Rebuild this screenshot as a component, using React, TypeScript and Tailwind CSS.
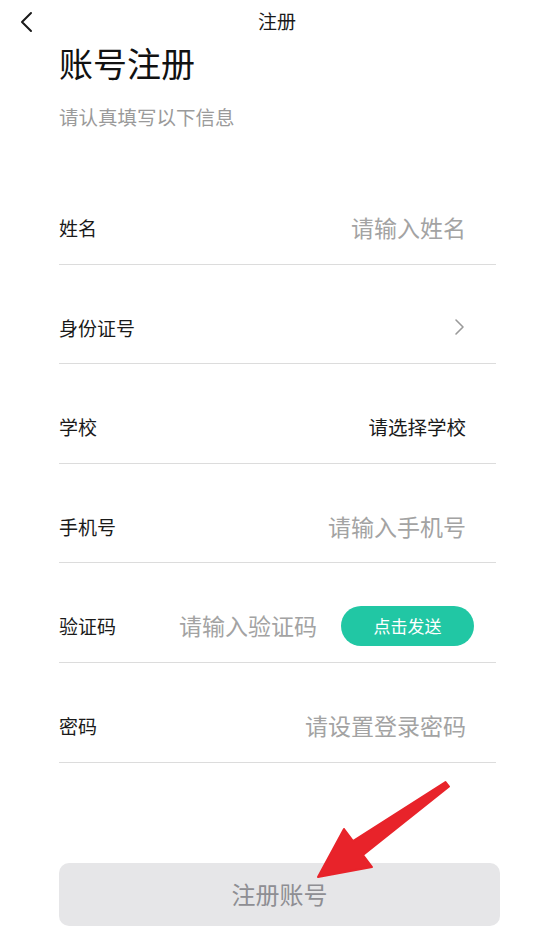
const FONT = { fontFamily: '"Noto Sans CJK SC", "Noto Sans", sans-serif' };

function Row({ label, children, last }: { label: string; children?: React.ReactNode; last?: boolean }) {
  return (
    <div className="h-[99.6px] pt-[26px] border-b border-[#dcdcdc]">
      <div className={`flex h-[73px] items-center ${last ? 'pr-[22px]' : 'pr-[30px]'}`}>
        <span className="text-[19px] leading-none text-[#1a1a1a]">{label}</span>
        <div className="flex flex-1 items-center justify-end">{children}</div>
      </div>
    </div>
  );
}

function Placeholder({ text }: { text: string }) {
  return <span className="text-[23px] leading-none text-[#a3a3a3]">{text}</span>;
}

export default function App() {
  return (
    <div className="relative w-[554px] h-[948px] bg-white overflow-hidden" style={FONT}>
      {/* Header */}
      <div className="relative flex h-[40px] items-center justify-center">
        <svg className="absolute left-[18px] top-[11px]" width="18" height="22" viewBox="0 0 18 22" fill="none">
          <path d="M13 2 L4 11 L13 20" stroke="#1a1a1a" strokeWidth="2" strokeLinecap="round" strokeLinejoin="round" />
        </svg>
        <span className="text-[19px] leading-none text-[#1a1a1a]">注册</span>
      </div>

      <div className="pl-[59px] pr-[58px]">
        <h1 className="mt-[6px] text-[34px] leading-[34px] text-[#111]">账号注册</h1>
        <p className="mt-[27px] text-[19.5px] leading-[20px] text-[#9a9a9a]">请认真填写以下信息</p>

        <div className="mt-[38px]">
          <Row label="姓名">
            <Placeholder text="请输入姓名" />
          </Row>
          <Row label="身份证号">
            <svg width="12" height="18" viewBox="0 0 12 18" fill="none" className="mr-[1px]">
              <path d="M3 2 L10 9 L3 16" stroke="#9a9a9a" strokeWidth="1.6" strokeLinecap="round" strokeLinejoin="round" />
            </svg>
          </Row>
          <Row label="学校">
            <span className="text-[19.5px] leading-none text-[#1a1a1a]">请选择学校</span>
          </Row>
          <Row label="手机号">
            <Placeholder text="请输入手机号" />
          </Row>
          <Row label="验证码" last>
            <Placeholder text="请输入验证码" />
            <button className="ml-[24px] flex h-[40px] w-[133px] items-center justify-center rounded-full bg-[#21c7a4] text-[17px] leading-none text-white">
              点击发送
            </button>
          </Row>
          <Row label="密码">
            <Placeholder text="请设置登录密码" />
          </Row>
        </div>

        <button className="mt-[100px] flex h-[63px] w-[441px] items-center justify-center rounded-[10px] bg-[#e6e6e8] text-[24px] leading-none text-[#8e8e93]">
          注册账号
        </button>
      </div>

      {/* annotation arrow */}
      <svg className="absolute left-0 top-0 pointer-events-none" width="554" height="948" viewBox="0 0 554 948">
        <polygon
          points="318,877 344,829 353,841 445.5,782 449,786.5 363,855 372,867"
          fill="#e8232a"
          stroke="#e8232a"
          strokeWidth="2"
          strokeLinejoin="round"
        />
      </svg>
    </div>
  );
}
